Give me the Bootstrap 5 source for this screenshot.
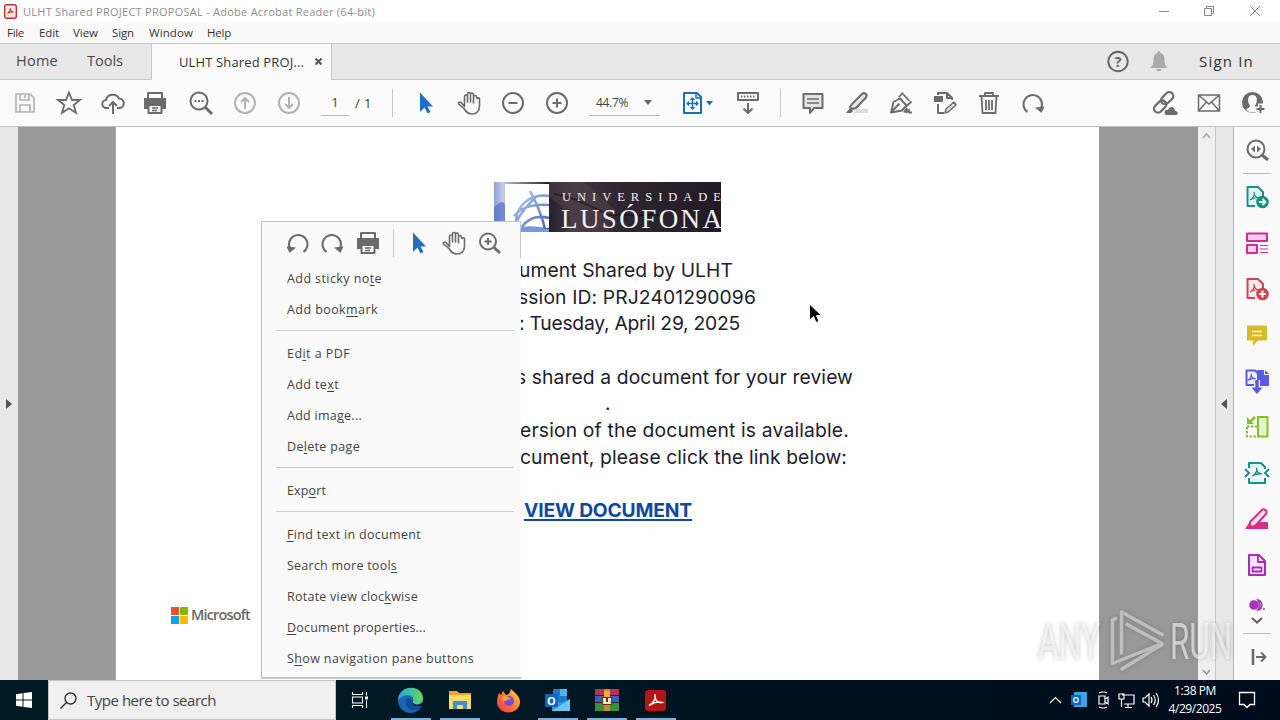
<!DOCTYPE html>
<html lang="en">
<head>
<meta charset="utf-8">
<meta name="viewport" content="width=device-width, initial-scale=1">
<title>ULHT Shared PROJECT PROPOSAL - Adobe Acrobat Reader (64-bit)</title>
<link href="https://cdn.jsdelivr.net/npm/bootstrap@5.3.0/dist/css/bootstrap.min.css" rel="stylesheet">
<style>
body{width:1280px;height:720px;overflow:hidden;font-family:"Open Sans","Noto Sans",sans-serif;font-size:12px;line-height:1;color:#333;background:#fff;position:relative}
svg{display:block;flex:none;overflow:visible}
.ic{width:24px;height:24px;fill:none;stroke:#6b6b6b;stroke-width:2;stroke-linejoin:round}
.dim{stroke:#b3b3b3}
[data-w]{white-space:pre;display:inline-block;flex:none}
.titlebar{height:23px;color:#8d8d8d;font-size:11px}
.menubar{height:20px;background:#fafafa;font-size:11.5px;position:relative}
.tabs-row{height:37px;background:#e8e8e8;border-top:1px solid #c8c8c8;border-bottom:1px solid #c8c8c8;font-size:14.5px;color:#4a4a4a}
.tab-open{width:181px;height:36px;background:#fbfbfb;border-left:1px solid #c8c8c8;border-right:1px solid #c8c8c8;color:#333;font-size:13px;padding-left:27px}
.tools-row{height:47px;background:#fbfbfb;border-bottom:1px solid #c2c2c2;padding-left:3px}
.slot{width:44px;height:46px;display:flex;align-items:center;justify-content:center;flex:none}
.vline{width:1px;height:28px;background:#c8c8c8;flex:none}
.field-line{height:26px;border-bottom:1px solid #b9b9b9;color:#444}
.stage{height:553px}
.paper{width:984px;background:#fff;border-left:1px solid #aaa;padding-top:55px}
.grey{background:#999}
.scroll{width:17px;background:#f0f0f0}
.strip{width:19px;background:#e8e8e8;border-left:1px solid #c6c6c6;border-right:1px solid #b5b5b5}
.rail{width:46px;background:#fafafa}
.rail .cell{height:46px;display:flex;align-items:center;justify-content:center}
.banner{margin-left:378px;width:227px;height:50px}
.doc{margin-top:25px;font-family:Inter,"Open Sans",sans-serif;font-size:19.3px;line-height:26.67px;color:#20202c;padding-left:404px}
.doc>div{height:26.67px}
.doc a{color:#0f47a1;font-weight:700;text-decoration:underline;text-decoration-thickness:2px;text-underline-offset:2px}
.ctx{left:261px;top:221px;width:260px;height:458px;background:#fafafa;border-left:1px solid #bdbdbd;border-top:1px solid #c4c4c4;border-bottom:2px solid #c3c8cc;font-size:12.5px;color:#444;z-index:3}
.ctx .item{height:31px;padding:2px 0 0 25px;display:flex;align-items:center}
.ctx hr{margin:5px 7px 7px 14px;border-top:1px solid #d0d0d0;opacity:1}
.ctx u{text-underline-offset:2px}
.ctx .edge{right:0;top:0;width:1px;height:36px;background:#c4c4c4}
.task{height:40px;background:linear-gradient(90deg,#001a24,#001824 40%,#000e1e 70%,#000c1c)}
.search{width:288px;height:40px;background:#f0f0f0;border:1px solid #c4c4c4;color:#444;font-size:15px}
.app{width:49px;height:40px;display:flex;align-items:center;justify-content:center;position:relative}
.app.on::after{content:"";position:absolute;left:5px;right:4px;bottom:0;height:2px;background:#76b0e8}
.clock{font-size:12px;color:#fff;width:64px;line-height:18px}
.wm{left:1030px;top:600px;z-index:4;pointer-events:none}
.cursor{left:808px;top:303px}
</style>
</head>
<body>
<svg width="0" height="0" class="position-absolute">
 <symbol id="arrow" viewBox="0 0 24 24"><path d="M7 1.500v19.500l4.500-4.500 3 6 3-1.400-3-5.600h5.500z" fill="#1f6fc4" stroke="none"/></symbol>
 <symbol id="hand" viewBox="0 0 24 24"><path d="M7.500 14V5.500a1.500 1.500 0 0 1 3 0V11V3a1.500 1.500 0 0 1 3 0v8V3.500a1.500 1.500 0 0 1 3 0V12V6a1.500 1.500 0 0 1 3 0l.5 1.500a1.500 1.500 0 0 1 2.500 0V15c0 5-3 8-7.500 8-4 0-6-2-8-5.500L1.500 13c-.5-1.500 1-2.500 2.500-1.500l3.500 4z" stroke-width="1.600"/></symbol>
 <symbol id="print" viewBox="0 0 24 24"><path d="M5 7V2h14v5" /><path d="M1 7h22v11h-4v-4H5v4H1z" fill="#6b6b6b" stroke="none"/><path d="M5.500 14h13v8h-13z" fill="#fafafa"/><path d="M9 17h6M9 19.500h5" stroke-width="1.300"/></symbol>
 <symbol id="cw" viewBox="0 0 24 24"><path d="M6.500 21A9.300 9.300 0 1 1 19.800 18" stroke-width="2.200"/><path d="M14 16.500L23.500 15.500 20.500 22z" fill="#6b6b6b" stroke="none"/></symbol>
 <symbol id="a" viewBox="0 0 12 12"><path d="M1.500 9.500C4 8 6 4.500 5.600 1.500 5.500 5 8 7.500 11 7.500 7 7 4 8 1.500 9.500z"/></symbol>
</svg>

<header>
 <div class="titlebar d-flex align-items-center">
  <svg class="ms-1" width="13" height="15" viewBox="0 0 13 15"><rect x=".7" y=".7" width="11.600" height="13.600" rx="2" fill="#ffeaea" stroke="#cf2b2b" stroke-width="1.400"/><use href="#a" x="2.500" y="3" width="8" height="8" fill="none" stroke="#cf2b2b" stroke-width="1.600"/></svg>
  <span data-w="352" style="margin-left:6px">ULHT Shared PROJECT PROPOSAL - Adobe Acrobat Reader (64-bit)</span>
  <svg class="ms-auto" width="122" height="22" viewBox="1158 0 122 22" fill="none" stroke="#888"><path d="M1159 10.500h10M1204.500 7.500h7v7h-7zM1206.500 7.500v-2h7v7h-2M1250 5l10 10M1260 5l-10 10"/></svg>
 </div>
 <nav class="menubar d-flex align-items-center">
  <span data-w="17" style="margin-left:7px">File</span><span data-w="20" style="margin-left:15px">Edit</span><span data-w="25" style="margin-left:14px">View</span><span data-w="22" style="margin-left:14px">Sign</span><span data-w="44" style="margin-left:15px">Window</span><span data-w="24" style="margin-left:14px">Help</span>
 </nav>
 <div class="tabs-row d-flex align-items-center">
  <span data-w="42" style="margin-left:16px">Home</span><span data-w="36" style="margin-left:29px">Tools</span>
  <div class="tab-open d-flex align-items-center" style="margin-left:28px"><span data-w="125" style="padding-top:2px">ULHT Shared PROJ...</span>
   <svg style="margin-left:11px" width="7" height="7" viewBox="0 0 7 7" stroke="#555" stroke-width="2"><path d="M.5.5l6 6M6.500.5l-6 6"/></svg></div>
  <div class="ms-auto d-flex align-items-center">
   <svg width="22" height="22" viewBox="0 0 22 22"><circle cx="11" cy="10.500" r="9.700" fill="none" stroke="#666" stroke-width="1.900"/><text x="11" y="15.500" text-anchor="middle" font-family="Open Sans" font-weight="700" font-size="14" fill="#666">?</text></svg>
   <svg style="margin-left:21px" width="18" height="21" viewBox="0 0 18 21" fill="#aaa"><path d="M9 0c1 0 1.500 1 1.500 2 3 1 4 3 4 6 0 5 .5 6 3 9H.5c2.500-3 3-4 3-9 0-3 1-5 4-6C7.500 1 8 0 9 0zM6.500 18h5c0 3-5 3-5 0z"/></svg>
   <span data-w="55" style="margin:0 26px 0 31px;color:#333;font-size:15px">Sign In</span>
  </div>
 </div>
 <div class="tools-row d-flex align-items-center">
  <div class="slot"><svg class="ic dim" viewBox="0 0 24 24"><path d="M3 3h14l4 4v14H3zM7 3v6h9V3M12 4v3M7 21v-7h10v7" stroke-width="1.700"/></svg></div>
  <div class="slot"><svg class="ic" viewBox="0 0 24 24"><path d="M12 1.500l3 7.500h8l-6.300 5 2.300 8-7-4.700-7 4.700 2.300-8L1 9h8z" stroke-width="1.800" stroke-linejoin="miter"/></svg></div>
  <div class="slot"><svg class="ic" viewBox="0 0 24 24"><path d="M8 17H5.500a4 4 0 0 1-.5-8 7 7 0 0 1 13-1.500 4.800 4.800 0 0 1 1 9.500H16M12 23V11M8 15l4-4 4 4"/></svg></div>
  <div class="slot pe-1"><svg class="ic"><use href="#print"/></svg></div>
  <div class="slot"><svg class="ic" viewBox="0 0 24 24"><circle cx="10" cy="10" r="8.500"/><path d="M16 16l7 7" stroke-width="3"/><path d="M5.500 10h2M9 10h2M12.500 10h2"/></svg></div>
  <div class="slot"><svg class="ic dim" viewBox="0 0 24 24"><circle cx="12" cy="12" r="10"/><path d="M12 18V7M8 11l4-4 4 4"/></svg></div>
  <div class="slot"><svg class="ic dim" viewBox="0 0 24 24"><circle cx="12" cy="12" r="10"/><path d="M12 6v11M8 13l4 4 4-4"/></svg></div>
  <div class="field-line d-flex align-items-center justify-content-center" style="width:28px;margin-left:10px;font-size:13px">1</div>
  <span data-w="17" style="margin-left:6px;font-size:13px">/ 1</span>
  <div class="vline" style="margin-left:20px"></div>
  <div class="slot" style="margin-left:10px"><svg class="ic"><use href="#arrow"/></svg></div>
  <div class="slot"><svg class="ic"><use href="#hand"/></svg></div>
  <div class="slot"><svg class="ic" viewBox="0 0 24 24"><circle cx="12" cy="12" r="10"/><path d="M7.500 12h9"/></svg></div>
  <div class="slot"><svg class="ic" viewBox="0 0 24 24"><circle cx="12" cy="12" r="10"/><path d="M7.500 12h9M12 7.500v9"/></svg></div>
  <div class="field-line d-flex align-items-center" style="width:71px;margin-left:10px;padding-left:7px"><span data-w="32" style="font-size:12px">44.7%</span><svg style="margin-left:16px" width="8" height="5" viewBox="0 0 8 5"><path d="M0 0h8L4 5z" fill="#666"/></svg></div>
  <div style="margin-left:22px" class="d-flex align-items-center"><svg class="ic" style="width:32px" viewBox="0 0 32 24" stroke="#2272b9"><g stroke="#1b6fb8"><path d="M2 2h13l4 4v16H2z"/><path d="M14 2v5h5" stroke-width="1.500"/><path d="M10.500 7v11M5 12.500h11M8.500 9l2-2 2 2M8.500 16l2 2 2-2M7 10.500l-2 2 2 2M14 10.500l2 2-2 2" stroke-width="1.300"/></g><path d="M24 10h7l-3.500 4.500z" fill="#1b6fb8" stroke="none"/></svg></div>
  <div class="slot" style="margin-left:12px"><svg class="ic" viewBox="0 0 24 24"><path d="M2 2h20v7H2z"/><path d="M5 5.500h14" stroke-dasharray="1.500 1.500"/><path d="M12 12v10M7.500 17.500l4.500 4.500 4.500-4.500"/></svg></div>
  <div class="vline" style="margin-left:10px"></div>
  <div class="slot" style="margin-left:10px"><svg class="ic" viewBox="0 0 24 24"><path d="M2.500 3h19v14H13l-4 5v-5H2.500z" fill="#e4e4e4"/><path d="M6 8h12M6 12h12" stroke-width="1.400"/></svg></div>
  <div class="slot"><svg class="ic" viewBox="0 0 24 24"><path d="M11 18h12v4H8z" fill="#ddd" stroke="none"/><path d="M7 13L17 3c2-2 6 0 4 3.500L11 17l-4 1-2-2z" fill="#e4e4e4"/><path d="M5 17l3 3-2 2H1z" fill="#6b6b6b" stroke="none"/></svg></div>
  <div class="slot"><svg class="ic" viewBox="0 0 24 24"><path d="M2 21.500L4.500 11 11 7.500l6.500 7L13 19.500zl7-7.500" stroke-width="1.900"/><circle cx="9.500" cy="13.500" r="1.300" fill="#6b6b6b" stroke="none"/><path d="M10 6l4-4.500M17.500 15l5-4.500M14 3l6.500 7M15 21.500l2.500-4v4l2.500-3v3h3" stroke-width="1.800"/></svg></div>
  <div class="slot"><svg class="ic" viewBox="0 0 24 24"><path d="M5 4V2h9l5 5v2M14 2v5h5M5 13v9h6"/><path d="M1 5h9v6H1z" fill="#6b6b6b" stroke="none"/><path d="M12 22l1-4 8-7 2 3-8 7z" fill="#e4e4e4" stroke-width="1.500"/></svg></div>
  <div class="slot"><svg class="ic" viewBox="0 0 24 24"><path d="M2 5h20M8 5V2h8v3M4.500 5l1 17h13l1-17M9 9v10M12 9v10M15 9v10" stroke-width="1.800"/></svg></div>
  <div class="slot"><svg class="ic"><use href="#cw"/></svg></div>
  <div class="d-flex ms-auto" style="margin-right:5px">
   <div class="slot"><svg class="ic" viewBox="0 0 24 24"><g transform="rotate(-45 11 11)"><rect x="9" y="6.500" width="14" height="8" rx="4" stroke-width="2.200"/><rect x="-2" y="7.500" width="14" height="8" rx="4" stroke-width="2.200"/></g><path d="M13 24c-3-2-1-6 2-5 2-5 7-3 7 1 4 0 3 4 1 4z" fill="#6b6b6b" stroke="#fafafa" stroke-width="1.500" paint-order="stroke"/></svg></div>
   <div class="slot"><svg class="ic" viewBox="0 0 24 24"><path d="M1.500 4h21v16h-21zM1.500 4L12 13 22.500 4M1.500 20l8-9M22.500 20l-8-9" stroke-width="1.500" stroke-linejoin="miter"/></svg></div>
   <div class="slot"><svg class="ic" viewBox="0 0 24 24"><circle cx="11.500" cy="11.500" r="10.500" fill="#6b6b6b" stroke="none"/><path d="M11.500 4c-6 0-5 8-2.500 10.500 0 2-2 2.500-4 4 3 4 10 4 13 0-2-1.500-4-2-4-4C16.500 12 17.500 4 11.500 4z" fill="#fafafa" stroke="none"/><path d="M19.500 12.500V24M14 18h10" stroke="#fafafa" stroke-width="5"/><path d="M19.500 14v8M15.500 18h8"/></svg></div>
  </div>
 </div>
</header>

<main class="stage d-flex">
 <div class="d-flex align-items-center" style="width:18px;background:#e8e8e8"><svg style="margin-left:6px" width="6" height="10" viewBox="0 0 6 10"><path d="M0 0l6 5-6 5z" fill="#555"/></svg></div>
 <div class="grey" style="width:97px"></div>
 <section class="paper">
  <svg class="banner" viewBox="0 0 227 50">
   <defs><linearGradient id="bg"><stop stop-color="#8da1df"/><stop offset=".04" stop-color="#c5cae6"/><stop offset=".1" stop-color="#8b8ba2"/><stop offset=".24" stop-color="#28202b"/><stop offset=".35" stop-color="#403543"/><stop offset=".55" stop-color="#302630"/><stop offset="1" stop-color="#211a25"/></linearGradient><linearGradient id="gl" x2="1" y2="1"><stop stop-color="#b9d9ee"/><stop offset="1" stop-color="#4460b8"/></linearGradient></defs>
   <path d="M0 0h227v50H0z" fill="url(#bg)"/><path d="M55 0h35l30 27-5 23H72c10-12 2-22-17-35z" fill="#574650" opacity=".45"/><path d="M60 12c18 2 40 14 55 21h50" stroke="#151018" fill="none" stroke-width="2" opacity=".6"/>
   <path d="M0 26c5-7 11-8 11-2v20H0z" fill="#4f6fc6" opacity=".7"/><path d="M11 2h44v44H11z" fill="#fff"/><path d="M20 50c2-6 20-8 35-3v3z" fill="#7799dc"/>
   <g fill="none" stroke="url(#gl)" stroke-width="2.500"><path d="M22 40C22 24 36 11 55 14M20 34c8-10 22-12 35-11M28 45c6-9 15-12 27-9M36 9c7 13 12 25 15 38M22 40c7-12 12-17 20-25"/></g>
   <g fill="#f5f1f5" font-family="Liberation Serif"><text x="68" y="18.500" font-size="12.500" textLength="159">UNIVERSIDADE</text><text x="67" y="46" font-size="27" textLength="161">LUSÓFONA</text></g>
  </svg>
  <div class="doc">
   <div style="margin-left:-1px"><span data-w="214">ument Shared by ULHT</span></div>
   <div style="margin-left:-2px"><span data-w="238">ssion ID: PRJ2401290096</span></div>
   <div style="margin-left:-1px"><span data-w="221">: Tuesday, April 29, 2025</span></div>
   <div></div>
   <div style="margin-left:-4px"><span data-w="337">s shared a document for your review</span></div>
   <div style="padding-left:85px">.</div>
   <div><span data-w="329">ersion of the document is available.</span></div>
   <div><span data-w="327">cument, please click the link below:</span></div>
   <div></div>
   <div style="margin-left:4px"><a href="#" data-w="168">VIEW DOCUMENT</a></div>
  </div>
  <div class="d-flex align-items-center" style="margin:83px 0 0 55px;gap:3px;color:#6a6a6a;font-size:14.5px;font-weight:600">
   <svg width="17" height="17" viewBox="0 0 17 17"><path d="M0 0h8v8H0z" fill="#f25022"/><path d="M9 0h8v8H9z" fill="#7fba00"/><path d="M0 9h8v8H0z" fill="#00a4ef"/><path d="M9 9h8v8H9z" fill="#ffb900"/></svg><span data-w="59">Microsoft</span>
  </div>
 </section>
 <div class="grey" style="width:99px"></div>
 <div class="scroll d-flex flex-column justify-content-between align-items-center py-1"><svg width="9" height="9" viewBox="0 0 9 9" fill="none" stroke="#aaa" stroke-width="1.500"><path d="M1 7l3.500-4L8 7"/></svg><svg width="9" height="9" viewBox="0 0 9 9" fill="none" stroke="#999" stroke-width="1.500"><path d="M1 3l3.500 4L8 3"/></svg></div>
 <div class="strip d-flex align-items-center"><svg style="margin-left:5px" width="6" height="10" viewBox="0 0 6 10"><path d="M6 0v10L0 5z" fill="#555"/></svg></div>
 <aside class="rail">
  <div class="cell"><svg class="ic" viewBox="0 0 24 24"><circle cx="11" cy="11" r="8.500"/><path d="M17 17l6 5" stroke-width="3"/><path d="M10 7.500v7L6 11zM12 7.500v7l4-3.500z" fill="#6b6b6b" stroke="none"/></svg></div>
  <div class="mx-auto" style="height:1px;width:28px;background:#bbb"></div>
  <div class="cell"><svg class="ic" viewBox="0 0 24 24"><g stroke="#1a8f84"><path d="M10 21H2.500V2H13l5 5v5" fill="#dff5f5"/><use href="#a" x="3.500" y="6" width="12" height="11" stroke-width="1.300"/></g><circle cx="17.500" cy="17" r="6.300" fill="#1a8f84" stroke="none"/><path d="M14 17h6M17.500 14l3 3-3 3" stroke="#fff" stroke-width="1.800"/></svg></div>
  <div class="cell"><svg class="ic" viewBox="0 0 24 24" ><g stroke="#ce2f8f"><path d="M2 2.500h20v7.500H2zM2 14h10v8H2z" fill="#ffcdf0"/><path d="M15 14.500h8M15 18h8M15 21.500h8" stroke-width="1.200"/></g></svg></div>
  <div class="cell"><svg class="ic" viewBox="0 0 24 24"><g stroke="#d3414f"><path d="M10 21H2.500V2H13l5 5v5" fill="#ffeaec"/><use href="#a" x="3.500" y="6" width="12" height="11" stroke-width="1.300"/></g><circle cx="17.500" cy="17" r="6.300" fill="#d3414f" stroke="none"/><path d="M14 17h7M17.500 13.500v7" stroke="#fff"/></svg></div>
  <div class="cell"><svg class="ic" viewBox="0 0 24 24"><path d="M2 2.500h20v15H13L8 23v-5.500H2z" fill="#d9b92c" stroke="none"/><path d="M7 8.500h10M7 12.500h10" stroke="#fff5c8" stroke-width="1.700"/></svg></div>
  <div class="cell"><svg class="ic" viewBox="0 0 24 24"><path d="M12 1h7v5h5v11H12z" fill="#5c5ce0" stroke="none"/><path d="M20 1l4 4h-4z" fill="#5c5ce0" stroke="none"/><g stroke="#5c5ce0"><path d="M1.500 1.500H10l3 3V16H1.500z" fill="#eeeeff"/><use href="#a" x="2" y="4" width="9" height="9" stroke-width="1.600"/></g><path d="M12 11v8" stroke="#fafafa" stroke-width="6"/><path d="M12 11v9" stroke="#5c5ce0" stroke-width="3.500"/><path d="M6.500 18.500h11L12 25z" fill="#5c5ce0" stroke="none"/></svg></div>
  <div class="cell"><svg class="ic" viewBox="0 0 24 24"><g stroke="#83bf26"><path d="M13 2h9.500v19.500H13z" fill="#e3f6c8"/><path d="M2 12v9.500h11M2 11.500h10" stroke-dasharray="2.500 1.500"/><path d="M10 2L4 8" stroke-width="2.500"/></g><path d="M2 2v7h7z" fill="#83bf26" stroke="none"/></svg></div>
  <div class="cell"><svg class="ic" viewBox="0 0 24 24"><g stroke="#1a8f84"><path d="M4 7V2h12l4 4v2M4 17v5h16v-5" fill="#e0f5f5"/><path d="M0 8l4 4-4 4M24 8l-4 4 4 4"/><use href="#a" x="6" y="6" width="12" height="11" stroke-width="1.500"/></g></svg></div>
  <div class="cell"><svg class="ic" viewBox="0 0 24 24"><path d="M14 15h9v7H5z" fill="#d62e83" stroke="none"/><path d="M5 15L17 3c2-2 6 1 4 4L10 19l-5 1z" fill="#ffe0ef" stroke="#d62e83"/><path d="M4 16l5 5-2 1H0z" fill="#d62e83" stroke="none"/></svg></div>
  <div class="cell"><svg class="ic" viewBox="0 0 24 24"><g stroke="#a62bb8"><path d="M4 2h10l6 6v14H4z" fill="#fbe3ff"/><path d="M13 2v7h7M7.500 14.500h9v4h-9z" stroke-width="1.800"/></g></svg></div>
  <div class="d-flex flex-column align-items-center" style="padding-top:12px"><svg width="18" height="10" viewBox="0 0 18 10"><circle cx="6" cy="5" r="4.800" fill="#a934bd"/><path d="M10 0c5 1 5 9 0 10 2-3 2-7 0-10z" fill="none" stroke="#a934bd" stroke-width="1.700"/><circle cx="16" cy="9" r="1" fill="#a934bd"/></svg>
  <svg style="margin-top:7px" width="12" height="7" viewBox="0 0 12 7" fill="none" stroke="#666" stroke-width="2.200"><path d="M1 1l5 4.500L11 1"/></svg></div>
  <div class="mx-auto" style="height:1px;width:28px;background:#bbb;margin-top:9px"></div>
  <div class="cell"><svg class="ic" style="width:18px" viewBox="0 0 18 24"><path d="M5 4v16" stroke-width="2.600"/><path d="M8 12h9M13 7.500l4.500 4.500-4.500 4.500"/></svg></div>
 </aside>
</main>

<footer class="task d-flex align-items-center text-white">
 <div class="app" style="width:48px"><svg width="16" height="16" viewBox="0 0 16 16" fill="#fff"><path d="M0 2.300l6.500-1v6.200H0zM7.500 1.100L16 0v7.500H7.500zM0 8.500h6.500v6.200l-6.500-1zM7.500 8.500H16V16l-8.500-1.100z"/></svg></div>
 <div class="search d-flex align-items-center"><svg style="margin-left:11px" width="17" height="17" viewBox="0 0 17 17" fill="none" stroke="#333" stroke-width="1.400"><circle cx="10.500" cy="6.500" r="5.500"/><path d="M6.500 10.500L.5 16.500"/></svg><span data-w="129" style="margin-left:10px;padding-top:1px">Type here to search</span></div>
 <div class="app"><svg width="17" height="16" viewBox="0 0 17 16" fill="none" stroke="#fff" stroke-width="1.100"><path d="M.5 0v2.500h10V0M.5 5h10v6H.5zM.5 16v-2.500h10V16M14.500 0v3.500M14.500 8.500V16"/><path d="M13 4.500h3v3h-3z" fill="#fff" stroke="none"/></svg></div>
 <div class="app on" style="margin-left:1px"><svg width="25" height="25" viewBox="0 0 24 24"><defs><linearGradient id="e1"><stop stop-color="#2aa7dd"/><stop offset="1" stop-color="#62d85c"/></linearGradient></defs><circle cx="12" cy="12" r="12" fill="#1668b5"/><path d="M0 12C0-4 24-4 24 10c0 6-8 7-10 4 2-4 0-7-4-7-5 0-8 2-10 5z" fill="url(#e1)"/><path d="M9 10c-4 5 0 11 7 11 3 0 5-1 7-3-4 1-9 0-9-5-1-3-4-4-5-3z" fill="#0f4b91"/><path d="M14 14c3 4 8 2 9.500-.5L24 16.500c-5 2-10 1-10-2.500z" fill="#001624"/></svg></div>
 <div class="app on"><svg width="22" height="20" viewBox="0 0 22 20"><path d="M0 1h8l2 2h12v16H0z" fill="#e6a52c"/><path d="M0 5h22v14H0z" fill="#ffd868"/><path d="M4 11h14v8h-4v-4H8v4H4z" fill="#3b91cf"/></svg></div>
 <div class="app"><svg width="23" height="24" viewBox="0 0 23 24"><defs><linearGradient id="ff" x1="1" x2="0" y2="1"><stop stop-color="#ffe13a"/><stop offset=".5" stop-color="#ff7a2a"/><stop offset="1" stop-color="#f52d66"/></linearGradient></defs><path d="M2 5l2 2 2-4 3 4c3 0 4-3 5-6 3 3 9 7 9 13a11 10 0 0 1-23 0C0 10 1 8 2 5z" fill="url(#ff)"/><circle cx="12" cy="13" r="5" fill="#7b47d9"/><path d="M5 9c4-2 7 0 9 2-3 0-4 2-6 2-2 0-3-2-3-4z" fill="#ffa32f"/></svg></div>
 <div class="app on"><svg width="25" height="23" viewBox="0 0 25 23"><path d="M8 0h14v14H8z" fill="#1b78cc"/><path d="M15 0h7v7h-7z" fill="#50b5ef"/><path d="M7 10l9 4 9-4v12H7z" fill="#2d9de5"/><path d="M7 22L25 10v12z" fill="#69c9f4"/><rect y="5" width="13" height="13" rx="1" fill="#0e66b9"/><text x="6.500" y="15.500" text-anchor="middle" font-size="11" font-weight="700" fill="#fff">O</text></svg></div>
 <div class="app on"><svg width="24" height="22" viewBox="0 0 24 22"><path d="M0 0h24v7H0z" fill="#b83253"/><path d="M0 7h24v7H0z" fill="#3c62b8"/><path d="M0 14h24v8H0z" fill="#3d8d3c"/><path d="M0 6.500h24M0 13.500h24" stroke="#301f30"/><path d="M9 0h6v22H9z" fill="#c88b2b"/><path d="M7.500 8.500h9v7h-9z" fill="#f1e6c4" stroke="#55351c"/><path d="M9 2h6v6H9z" fill="#f2a93a"/><path d="M11 8h2v5h-2z" fill="#553b20"/></svg></div>
 <div class="app on"><svg width="21" height="21" viewBox="0 0 21 21"><rect width="21" height="21" rx="3" fill="#b51414"/><path d="M4 15.500c4-2 7-7 6-11-1 4 2 9 7 8-4-1.500-9 .5-13 3z" fill="none" stroke="#fff" stroke-width="1.500"/></svg></div>
 <div class="ms-auto d-flex align-items-center">
  <svg width="112" height="20" viewBox="1048 690 112 20" fill="none" stroke="#fff" stroke-width="1.200" style="margin-right:3px"><path d="M1050 703l5.500-5.500 5.500 5.500"/><path d="M1074 692h13v15h-13z" fill="#35a6e8" stroke="none"/><path d="M1071 695h10v10h-10z" fill="#0e66b9" stroke="none"/><circle cx="1076" cy="700" r="2.300"/><path d="M1099 696h6v8h-6zM1105 699l3-2v7l-3-2M1099 693q4-2 8 0M1099 707q4 2 8 0M1122 695h12v9h-10M1119 694h5v5h-5zM1121.500 699v8M1128 704v3M1125 707.500h7M1143 698h2l4-4v12l-4-4h-2zM1151 697q2 3 0 6M1153.500 695q3.500 5 0 10M1156 693q5 7 0 14"/></svg>
  <div class="clock text-center"><span data-w="42">1:38 PM</span><br><span data-w="53">4/29/2025</span></div>
  <svg style="margin:0 25px 0 12px" width="16" height="16" viewBox="0 0 16 16" fill="none" stroke="#fff" stroke-width="1.300"><path d="M.5.5h15v12H11l-3 3-3-3H.5z"/></svg>
 </div>
</footer>

<div class="ctx position-absolute">
 <div class="edge position-absolute"></div>
 <div class="d-flex align-items-center" style="height:41px;padding-left:24px">
  <svg class="ic" style="transform:scaleX(-1)"><use href="#cw"/></svg>
  <svg class="ic" style="margin-left:10px"><use href="#cw"/></svg>
  <svg class="ic" style="margin-left:12px"><use href="#print"/></svg>
  <div class="vline" style="margin-left:13px"></div>
  <svg class="ic" style="margin-left:12px"><use href="#arrow"/></svg>
  <svg class="ic" style="margin-left:12px"><use href="#hand"/></svg>
  <svg class="ic" style="margin-left:12px" viewBox="0 0 24 24"><circle cx="10" cy="10.500" r="8"/><path d="M16 16.500l6 5.500" stroke-width="3"/><path d="M6.500 10.500h7M10 7v7"/></svg>
 </div>
 <div class="item"><span data-w="95">Add sticky no<u>t</u>e</span></div>
 <div class="item"><span data-w="91">Add book<u>m</u>ark</span></div>
 <hr>
 <div class="item"><span data-w="63">Ed<u>i</u>t a PDF</span></div>
 <div class="item"><span data-w="52">Add te<u>x</u>t</span></div>
 <div class="item"><span data-w="75">Add ima<u>g</u>e...</span></div>
 <div class="item"><span data-w="73">De<u>l</u>ete page</span></div>
 <hr>
 <div class="item"><span data-w="39">Exp<u>o</u>rt</span></div>
 <hr>
 <div class="item"><span data-w="134"><u>F</u>ind text in document</span></div>
 <div class="item"><span data-w="110">Search more tool<u>s</u></span></div>
 <div class="item"><span data-w="131">Rotate view cloc<u>k</u>wise</span></div>
 <div class="item"><span data-w="139"><u>D</u>ocument properties...</span></div>
 <div class="item"><span data-w="187">S<u>h</u>ow navigation pane buttons</span></div>
</div>

<svg class="cursor position-absolute" width="14" height="20" viewBox="0 0 14 20"><path d="M1.500 1v16l4-3.500 2.500 6 3-1.200-2.500-5.800h5z" fill="#000" stroke="#fff"/></svg>

<svg class="wm position-absolute" width="210" height="80" viewBox="1030 600 210 80" style="filter:drop-shadow(0 0 2px rgba(0,0,0,.4))">
 <g fill="#fff" fill-opacity=".6" font-family="Roboto" font-size="50"><text x="1038" y="659" textLength="62" lengthAdjust="spacingAndGlyphs">ANY</text><text x="1170" y="659" textLength="62" lengthAdjust="spacingAndGlyphs">RUN</text></g>
 <g fill="none" stroke="#fff" stroke-opacity=".45" stroke-width="3.500" stroke-linejoin="round" stroke-linecap="round"><path d="M1115.500 618.500L1112.500 620v43.500L1162 643.500 1127 624.500M1121.500 653V612L1162 634.500M1162 644.500L1122 669"/></g>
</svg>

<script src="https://cdn.jsdelivr.net/npm/bootstrap@5.3.0/dist/js/bootstrap.bundle.min.js"></script>
<script>
// Track each label out to its set width, in pixels.
document.querySelectorAll('[data-w]').forEach(function (el) {
  var gap = el.dataset.w - el.getBoundingClientRect().width;
  el.style.letterSpacing = (gap / el.textContent.length).toFixed(3) + 'px';
});
</script>
</body>
</html>
